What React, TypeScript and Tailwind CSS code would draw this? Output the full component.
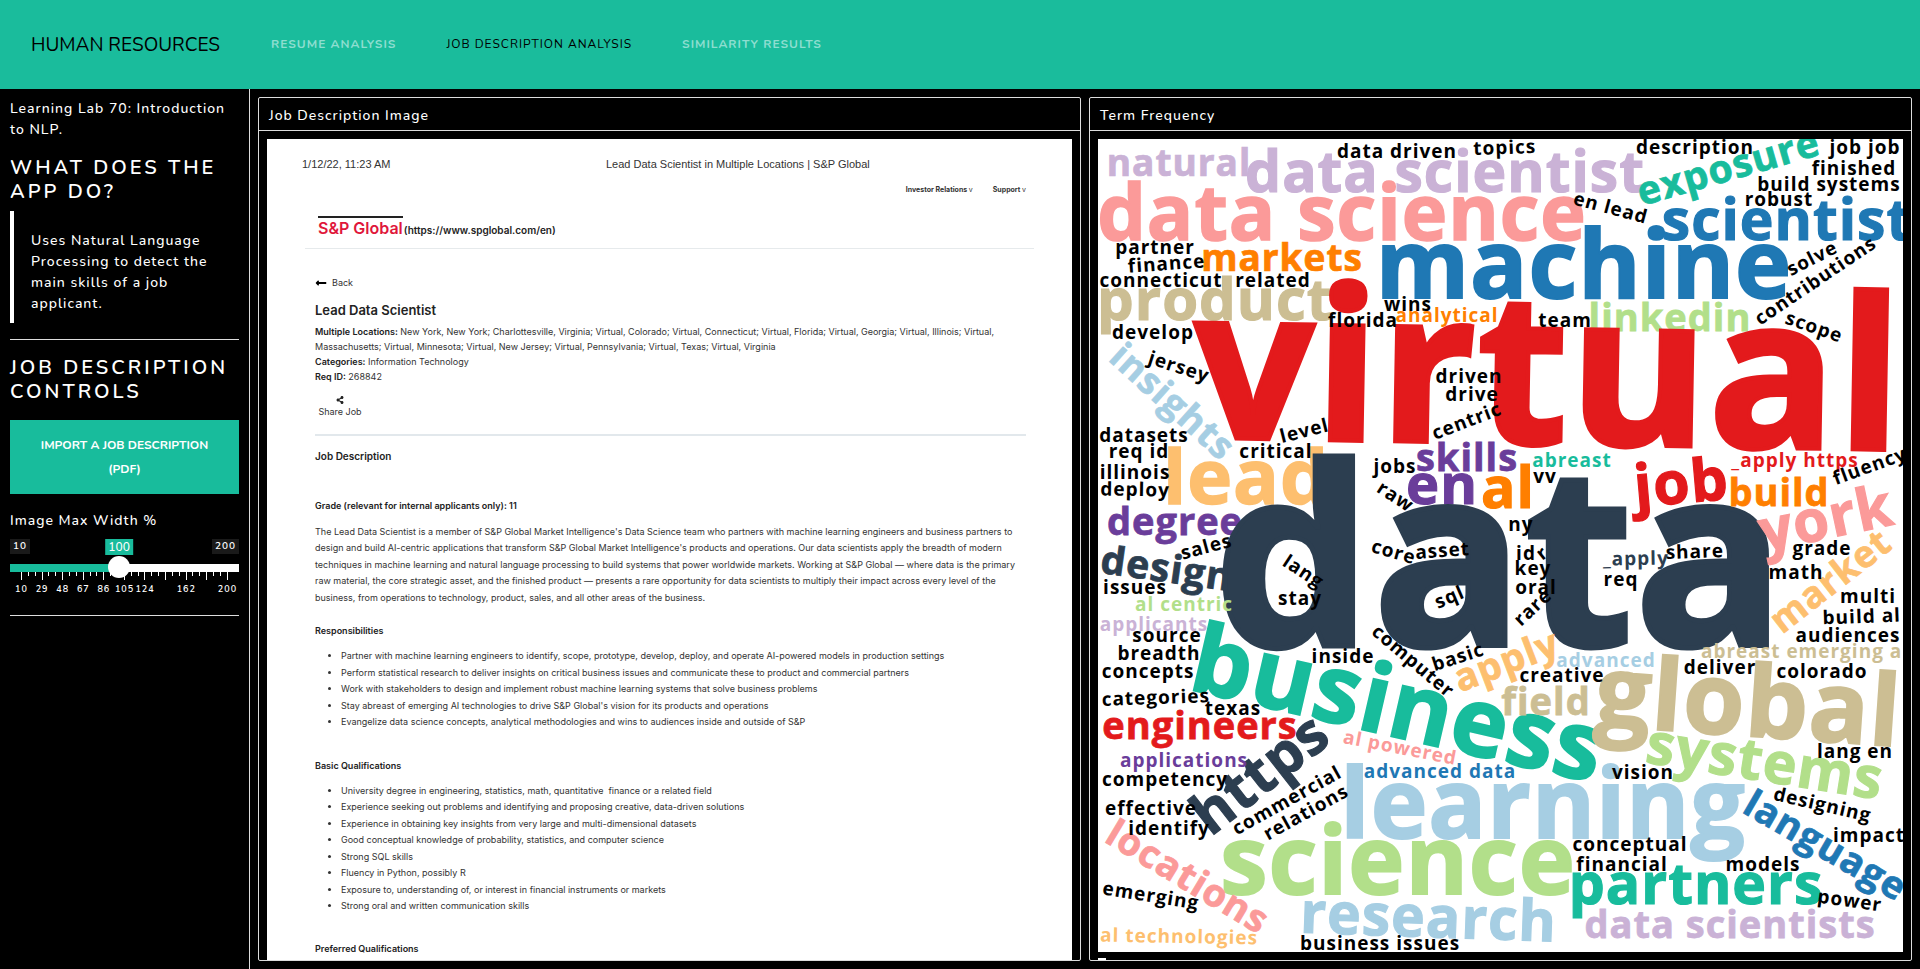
import React, { useState } from "react";
import { FaLongArrowAltLeft, FaShareAlt } from "react-icons/fa";

type Word = [text: string, x: number, y: number, size: number, angle: number, color: string];

const NAVY = "#2c3e50";
const TEAL = "#18bc9c";
const SKY = "#a6cee3";
const BLUE = "#1f78b4";
const LIME = "#b2df8a";
const PINK = "#fb9a99";
const RED = "#e31a1c";
const PEACH = "#fdbf6f";
const ORANGE = "#ff7f00";
const LILAC = "#cab2d6";
const PURPLE = "#6a3d9a";
const SAND = "#ccbe93";
const BLACK = "#000000";

/* Word centre on its baseline, in the coordinates of the cloud's view box */
const words: Word[] = [
  ["natural", 81, 37, 37, 0, LILAC],
  ["data scientist", 347, 53, 57, 0, LILAC],
  ["data science", 244, 101, 77, 0, PINK],
  ["markets", 184, 132, 37, 0, ORANGE],
  ["machine", 486, 159, 95, 0, BLUE],
  ["exposure", 634, 41, 39, -16, TEAL],
  ["scientist", 689, 101, 57, 0, BLUE],
  ["product", 117, 181, 58, 0, SAND],
  ["linkedin", 572, 192, 38, 0, LIME],
  ["insights", 66, 272, 37, 42, SKY],
  ["lead", 148, 365, 76, 0, PEACH],
  ["skills", 369, 332, 38, 0, PURPLE],
  ["en", 344, 365, 56, 0, PURPLE],
  ["al", 410, 369, 57, 0, ORANGE],
  ["degree", 77, 396, 38, 0, PURPLE],
  ["design", 67, 443, 39, 8, NAVY],
  ["virtual", 449, 305, 211, 1, RED],
  ["business", 293, 597, 95, 13, TEAL],
  ["data", 402, 507, 250, 0, NAVY],
  ["job", 585, 364, 59, -5, RED],
  ["build", 681, 367, 38, 0, ORANGE],
  ["york", 732, 399, 58, -12, PINK],
  ["market", 740, 452, 37, -38, PEACH],
  ["apply", 413, 534, 38, -21, PEACH],
  ["field", 448, 576, 38, 0, SAND],
  ["global", 648, 597, 99, 4, SAND],
  ["engineers", 102, 600, 38, 0, RED],
  ["https", 174, 650, 57, -38, NAVY],
  ["learning", 445, 699, 96, 0, SKY],
  ["systems", 664, 642, 57, 9, LIME],
  ["language", 721, 718, 38, 30, BLUE],
  ["science", 300, 755, 95, 0, LIME],
  ["partners", 598, 765, 57, 0, TEAL],
  ["research", 330, 798, 57, 2, SKY],
  ["data scientists", 632, 799, 38, 0, LILAC],
  ["locations", 83, 749, 38, 31, PINK],
  ["analytical", 349, 183, 19, 0, ORANGE],
  ["abreast", 474, 328, 19, 0, TEAL],
  ["_apply https", 697, 328, 19, 0, RED],
  ["_apply", 538, 426, 19, -1, NAVY],
  ["advanced", 508, 528, 19, 0, SKY],
  ["abreast emerging al", 707, 519, 19, 0, SAND],
  ["al powered", 301, 615, 19, 11, PINK],
  ["advanced data", 342, 639, 19, 0, BLUE],
  ["al centric", 86, 472, 19, 0, LIME],
  ["applicants", 56, 492, 19, 0, LILAC],
  ["applications", 86, 628, 19, 0, PURPLE],
  ["al technologies", 81, 804, 19, 1, PEACH],
  ["data driven", 299, 19, 19, 0, BLACK],
  ["topics", 407, 15, 19, -2, BLACK],
  ["description", 597, 15, 19, 0, BLACK],
  ["job job", 767, 15, 19, 0, BLACK],
  ["finished", 756, 36, 19, 0, BLACK],
  ["build systems", 731, 52, 19, 0, BLACK],
  ["robust", 681, 67, 19, 0, BLACK],
  ["en lead", 511, 75, 19, 15, BLACK],
  ["partner", 57, 115, 19, 0, BLACK],
  ["finance", 69, 131, 19, -4, BLACK],
  ["connecticut", 63, 148, 19, 0, BLACK],
  ["related", 175, 148, 19, 0, BLACK],
  ["wins", 310, 172, 19, 0, BLACK],
  ["florida", 265, 188, 19, 0, BLACK],
  ["team", 467, 188, 19, 0, BLACK],
  ["develop", 55, 200, 19, 0, BLACK],
  ["jersey", 79, 234, 19, 18, BLACK],
  ["driven", 371, 244, 19, 0, BLACK],
  ["drive", 374, 262, 19, 0, BLACK],
  ["centric", 371, 288, 19, -21, BLACK],
  ["solve", 717, 125, 19, -27, BLACK],
  ["contributions", 721, 147, 19, -34, BLACK],
  ["scope", 714, 194, 19, 19, BLACK],
  ["level", 208, 298, 19, -14, BLACK],
  ["datasets", 46, 303, 19, 0, BLACK],
  ["req id", 41, 319, 19, 0, BLACK],
  ["critical", 178, 319, 19, 0, BLACK],
  ["illinois", 37, 340, 19, 0, BLACK],
  ["deploy", 37, 357, 19, 1, BLACK],
  ["jobs", 297, 334, 19, 0, BLACK],
  ["raw", 294, 363, 19, 33, BLACK],
  ["vv", 447, 344, 19, 0, BLACK],
  ["fluency", 774, 333, 19, -20, BLACK],
  ["grade", 724, 416, 19, 0, BLACK],
  ["math", 698, 440, 19, 0, BLACK],
  ["multi", 770, 464, 19, 0, BLACK],
  ["build al", 764, 484, 19, -2, BLACK],
  ["audiences", 750, 503, 19, 0, BLACK],
  ["ny", 423, 392, 19, 0, BLACK],
  ["id", 428, 421, 19, 0, BLACK],
  ["r", 448, 419, 19, -38, BLACK],
  ["key", 435, 436, 19, 0, BLACK],
  ["oral", 438, 455, 19, 0, BLACK],
  ["rare", 439, 473, 19, -43, BLACK],
  ["share", 597, 419, 19, -2, BLACK],
  ["req", 523, 447, 19, 0, BLACK],
  ["sales", 110, 414, 19, -15, BLACK],
  ["core", 294, 419, 19, 16, BLACK],
  ["asset", 345, 418, 19, -4, BLACK],
  ["lang", 202, 438, 19, 33, BLACK],
  ["stay", 202, 466, 19, 0, BLACK],
  ["sql", 354, 464, 19, -23, BLACK],
  ["issues", 37, 455, 19, 0, BLACK],
  ["source", 69, 503, 19, 0, BLACK],
  ["breadth", 61, 521, 19, 0, BLACK],
  ["concepts", 50, 539, 19, 0, BLACK],
  ["inside", 245, 524, 19, 0, BLACK],
  ["computer", 311, 527, 19, 40, BLACK],
  ["basic", 362, 524, 19, -18, BLACK],
  ["deliver", 622, 535, 19, 0, BLACK],
  ["colorado", 724, 539, 19, 0, BLACK],
  ["creative", 464, 543, 19, 0, BLACK],
  ["categories", 58, 565, 19, -2, BLACK],
  ["texas", 135, 576, 19, 0, BLACK],
  ["competency", 67, 647, 19, 0, BLACK],
  ["effective", 53, 676, 19, 0, BLACK],
  ["identify", 71, 696, 19, 0, BLACK],
  ["commercial", 192, 667, 19, -29, BLACK],
  ["relations", 211, 679, 19, -29, BLACK],
  ["emerging", 52, 763, 19, 9, BLACK],
  ["business issues", 282, 811, 19, 0, BLACK],
  ["vision", 545, 640, 19, 0, BLACK],
  ["lang en", 757, 619, 19, 0, BLACK],
  ["designing", 723, 672, 19, 13, BLACK],
  ["impact", 771, 703, 19, 0, BLACK],
  ["conceptual", 532, 712, 19, 0, BLACK],
  ["financial", 524, 732, 19, 0, BLACK],
  ["models", 665, 732, 19, 0, BLACK],
  ["power", 751, 768, 19, 8, BLACK],
];

function WordCloud() {
  return (
    <svg
      viewBox="0 0 805 813"
      role="img"
      aria-label="Term frequency word cloud"
      className="block w-full bg-white font-['Open_Sans','Noto_Sans',sans-serif] font-bold tracking-[1px]"
    >
      {words.map(([text, x, y, size, angle, color]) => (
        <text
          key={text + x}
          textAnchor="middle"
          fontSize={size}
          fill={color}
          stroke={color}
          strokeWidth={size > 30 ? size / 50 : 0}
          transform={`translate(${x} ${y}) rotate(${angle})`}
        >
          {text}
        </text>
      ))}
    </svg>
  );
}

const responsibilities = [
  "Partner with machine learning engineers to identify, scope, prototype, develop, deploy, and operate AI-powered models in production settings",
  "Perform statistical research to deliver insights on critical business issues and communicate these to product and commercial partners",
  "Work with stakeholders to design and implement robust machine learning systems that solve business problems",
  "Stay abreast of emerging AI technologies to drive S&P Global's vision for its products and operations",
  "Evangelize data science concepts, analytical methodologies and wins to audiences inside and outside of S&P",
];

const qualifications = [
  "University degree in engineering, statistics, math, quantitative\u00a0 finance or a related field",
  "Experience seeking out problems and identifying and proposing creative, data-driven solutions",
  "Experience in obtaining key insights from very large and multi-dimensional datasets",
  "Good conceptual knowledge of probability, statistics, and computer science",
  "Strong SQL skills",
  "Fluency in Python, possibly R",
  "Exposure to, understanding of, or interest in financial instruments or markets",
  "Strong oral and written communication skills",
];

function BulletList({ items }: { items: string[] }) {
  return (
    <ul className="mt-[9px] list-disc pl-[26px] leading-[1.83] whitespace-nowrap">
      {items.map((item) => (
        <li key={item}>{item}</li>
      ))}
    </ul>
  );
}

function JobDocument() {
  return (
    <article className="flow-root bg-white text-[9px] text-[#333] font-[Inter,sans-serif]">
      <div className="mt-[18px] flex pl-[35px] font-['Liberation_Sans',sans-serif] text-[11px] leading-[14px] text-[#333]">
        <span className="w-[304px]">1/12/22, 11:23 AM</span>
        <span>Lead Data Scientist in Multiple Locations | S&amp;P Global</span>
      </div>
      <div className="mt-3 mr-[46px] flex justify-end gap-5 text-[7px] leading-[14px] font-bold text-[#333]">
        <span>Investor Relations <span className="font-normal">v</span></span>
        <span>Support <span className="font-normal">v</span></span>
      </div>
      <div className="mx-[38px] mt-[19px] flex items-baseline gap-px border-b border-[#e6eaec] pb-[10px] pl-[13px]">
        <span className="border-t-2 border-[#222] pt-px text-[16px] leading-[19px] font-semibold text-[#e0173b]">S&amp;P Global</span>
        <a href="https://www.spglobal.com/en" className="text-[10px] leading-[14px] font-semibold text-[#222]">(https://www.spglobal.com/en)</a>
      </div>

      <div className="mr-[46px] ml-12">
        <div className="mt-[27px] flex items-center gap-[5px] leading-[14px]">
          <FaLongArrowAltLeft className="h-3 w-3 text-black" />
          Back
        </div>
        <h1 className="mt-3 text-[13px] leading-4 font-semibold text-[#222]">Lead Data Scientist</h1>
        <div className="mt-[6px] leading-[15px]">
          <p>
            <b className="font-semibold text-[#222]">Multiple Locations:</b> New York, New York; Charlottesville, Virginia; Virtual, Colorado; Virtual, Connecticut; Virtual, Florida; Virtual, Georgia; Virtual, Illinois; Virtual,
            <br />
            Massachusetts; Virtual, Minnesota; Virtual, New Jersey; Virtual, Pennsylvania; Virtual, Texas; Virtual, Virginia
          </p>
          <p><b className="font-semibold text-[#222]">Categories:</b> Information Technology</p>
          <p><b className="font-semibold text-[#222]">Req ID:</b> 268842</p>
        </div>
        <div className="mt-3 ml-1 flex w-[42px] flex-col items-center whitespace-nowrap">
          <FaShareAlt className="h-2 w-2 text-[#222]" />
          <span className="leading-4">Share Job</span>
        </div>
        <hr className="mt-[14px] border-t-2 border-[#e2e8ec]" />
        <h2 className="mt-3 text-[10px] leading-4 font-semibold text-[#222]">Job Description</h2>
        <h3 className="mt-[34px] leading-4 font-semibold text-[#222]">Grade (relevant for internal applicants only): 11</h3>
        <p className="mt-[10px] leading-[1.83] whitespace-nowrap">
          The Lead Data Scientist is a member of S&amp;P Global Market Intelligence's Data Science team who partners with machine learning engineers and business partners to
          <br />
          design and build AI-centric applications that transform S&amp;P Global Market Intelligence's products and operations. Our data scientists apply the breadth of modern
          <br />
          techniques in machine learning and natural language processing to build systems that power worldwide markets. Working at S&amp;P Global — where data is the primary
          <br />
          raw material, the core strategic asset, and the finished product — presents a rare opportunity for data scientists to multiply their impact across every level of the
          <br />
          business, from operations to technology, product, sales, and all other areas of the business.
        </p>
        <h3 className="mt-[17px] leading-4 font-semibold text-[#222]">Responsibilities</h3>
        <BulletList items={responsibilities} />
        <h3 className="mt-[27px] leading-4 font-semibold text-[#222]">Basic Qualifications</h3>
        <BulletList items={qualifications} />
        <h3 className="mt-[27px] leading-4 font-semibold text-[#222]">Preferred Qualifications</h3>
        <div className="h-10" />
      </div>
    </article>
  );
}

function Panel({ title, children }: { title: string; children: React.ReactNode }) {
  return (
    <section className="flex min-w-0 flex-1 flex-col overflow-hidden rounded-[2px] border border-[#ddd]">
      <h2 className="shrink-0 border-b border-[#ddd] px-[10px] pt-[3px] text-[14px] leading-[29px] font-medium tracking-[1px]">{title}</h2>
      <div className="min-h-0 flex-1 overflow-hidden px-2 pt-2">{children}</div>
    </section>
  );
}

const tickLabels = ["10", "29", "48", "67", "86", "105", "124", "", "162", "", "200"];

function WidthSlider() {
  const [value, setValue] = useState(100);
  const share = ((value - 10) / 190) * 100;
  return (
    <div className="mt-4">
      <label htmlFor="max-width" className="block leading-[21px]">Image Max Width %</label>
      <div className="relative mt-2 flex justify-between text-[10px] leading-[15px] font-semibold">
        <span className="bg-[#1a1a1a] px-[3px]">10</span>
        <span className="bg-[#1a1a1a] px-[3px]">200</span>
        <div className="absolute inset-x-[11px] top-0">
          <output
            htmlFor="max-width"
            className="absolute -translate-x-1/2 bg-[#18bc9c] px-[3px] text-[12px] leading-4 font-medium tracking-normal"
            style={{ left: `${share}%` }}
          >
            {value}
          </output>
        </div>
      </div>
      <div className="relative mt-[10px] h-2 bg-white">
        <div className="h-full bg-[#18bc9c]" style={{ width: `${share}%` }} />
        <input
          id="max-width"
          type="range"
          min={10}
          max={200}
          value={value}
          onChange={(e) => setValue(Number(e.target.value))}
          className="absolute inset-x-0 -top-2 h-[22px] w-full cursor-pointer appearance-none bg-transparent outline-none [&::-webkit-slider-thumb]:h-[22px] [&::-webkit-slider-thumb]:w-[22px] [&::-webkit-slider-thumb]:appearance-none [&::-webkit-slider-thumb]:rounded-full [&::-webkit-slider-thumb]:bg-white"
        />
      </div>
      <div className="flex justify-between px-[11px]">
        {Array.from({ length: 31 }, (_, i) => (
          <span key={i} className={i % 3 === 0 ? "h-2 w-px bg-white" : "h-1 w-px bg-white"} />
        ))}
      </div>
      <div className="mt-px flex justify-between px-[11px] text-[9px] leading-4 font-semibold">
        {tickLabels.map((label, i) => (
          <span key={i} className="flex w-px justify-center">{label}</span>
        ))}
      </div>
    </div>
  );
}

function Sidebar() {
  return (
    <aside className="w-[250px] shrink-0 border-r border-[#ddd] px-[10px] pt-[9px] text-[14px] leading-[21px] font-medium tracking-[1px]">
      <p>Learning Lab 70: Introduction to NLP.</p>
      <h2 className="mt-4 text-[20px] leading-6 font-semibold tracking-[3px] uppercase">What does the app do?</h2>
      <blockquote className="mt-[7px] border-l-4 border-white pt-[19px] pb-[9px] pl-[17px]">
        <p>Uses Natural Language Processing to detect the main skills of a job applicant.</p>
      </blockquote>
      <hr className="mt-4 border-[#ddd]" />
      <h2 className="mt-4 text-[20px] leading-6 font-semibold tracking-[3px] uppercase">Job Description Controls</h2>
      <button type="button" className="mt-4 w-full bg-[#18bc9c] px-6 py-[13px] text-[12px] leading-6 font-bold tracking-normal uppercase">
        Import a Job Description (PDF)
      </button>
      <WidthSlider />
      <hr className="mt-[18px] border-[#ddd]" />
    </aside>
  );
}

export default function App() {
  return (
    <div className="flex h-screen flex-col overflow-hidden bg-black font-[Nunito,Lato,sans-serif] text-white">
      <header className="flex h-[89px] shrink-0 items-center bg-[#1abc9c] pl-[31px] text-black uppercase">
        <a href="#home" className="text-[19px] leading-6">Human Resources</a>
        <nav className="ml-[51px] flex gap-[50px] pb-[2px] text-[12px] leading-6 tracking-[1px]">
          <a href="#resume" className="font-bold text-[#8eded0]">Resume Analysis</a>
          <a href="#job" aria-current="page">Job Description Analysis</a>
          <a href="#similarity" className="font-bold text-[#8eded0]">Similarity Results</a>
        </nav>
      </header>
      <div className="flex min-h-0 flex-1">
        <Sidebar />
        <main className="flex min-w-0 flex-1 gap-2 p-2">
          <Panel title="Job Description Image">
            <JobDocument />
          </Panel>
          <Panel title="Term Frequency">
            <WordCloud />
            <div className="mt-[6px] h-[2px] w-2 bg-white" />
          </Panel>
        </main>
      </div>
    </div>
  );
}
